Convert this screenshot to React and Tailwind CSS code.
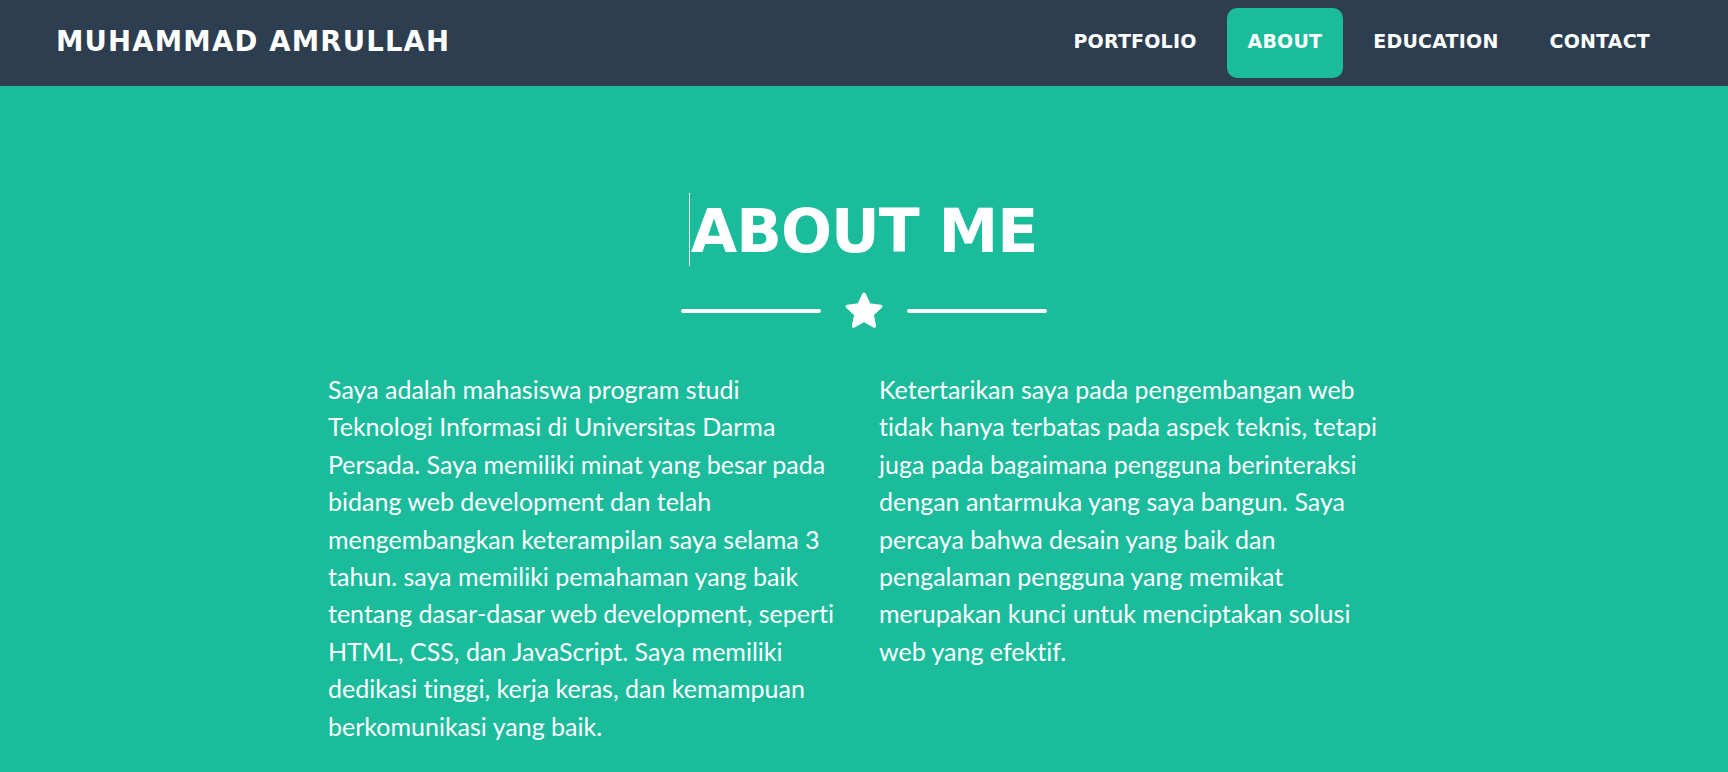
export default function App() {
  const head = { fontFamily: '"DejaVu Sans", "Open Sans", sans-serif' };
  const body = { fontFamily: 'Lato, "Open Sans", sans-serif' };
  return (
    <div className="min-h-[772px] bg-[#1abc9c]">
      <nav className="h-[86px] bg-[#2c3e50] flex items-center justify-between pl-[56px] pr-[57px]" style={head}>
        <a className="text-white font-bold text-[27.5px] tracking-[1.2px] pb-[2px]">MUHAMMAD AMRULLAH</a>
        <ul className="flex items-center gap-[9px] text-white font-bold text-[19px] tracking-[0.2px]">
          <li className="px-[21px] h-[70px] pb-[4px] flex items-center rounded-[10px]">PORTFOLIO</li>
          <li className="px-[21px] h-[70px] pb-[4px] flex items-center rounded-[10px] bg-[#1abc9c]">ABOUT</li>
          <li className="px-[21px] h-[70px] pb-[4px] flex items-center rounded-[10px]">EDUCATION</li>
          <li className="px-[21px] h-[70px] pb-[4px] flex items-center rounded-[10px]">CONTACT</li>
        </ul>
      </nav>
      <section className="pt-[115px] text-white">
        <div className="flex justify-center">
          <h2 className="relative font-bold text-[60px] leading-none tracking-[-1px]" style={head}>
            <span className="absolute left-[-2px] top-[-8px] h-[73px] w-px bg-white" />
            ABOUT ME
          </h2>
        </div>
        <div className="flex items-center justify-center gap-[21px] mt-[29px]">
          <div className="h-[4px] w-[140px] bg-white rounded-full" />
          <svg width="44" height="42" viewBox="0 0 24 24" fill="white" stroke="white" strokeWidth="2" strokeLinejoin="round">
            <path d="M12 2.5l2.9 6.1 6.6.8-4.9 4.6 1.3 6.6L12 17.3l-5.9 3.3 1.3-6.6-4.9-4.6 6.6-.8z" />
          </svg>
          <div className="h-[4px] w-[140px] bg-white rounded-full" />
        </div>
        <div className="grid grid-cols-[521px_521px] gap-[30px] justify-center mt-[39px] text-[25px] leading-[37.4px] [font-variant-ligatures:none]" style={body}>
          <p>Saya adalah mahasiswa program studi Teknologi Informasi di Universitas Darma Persada. Saya memiliki minat yang besar pada bidang web development dan telah mengembangkan keterampilan saya selama 3 tahun. saya memiliki pemahaman yang baik tentang dasar-dasar web development, seperti HTML, CSS, dan JavaScript. Saya memiliki dedikasi tinggi, kerja keras, dan kemampuan berkomunikasi yang baik.</p>
          <p>Ketertarikan saya pada pengembangan web tidak hanya terbatas pada aspek teknis, tetapi juga pada bagaimana pengguna berinteraksi dengan antarmuka yang saya bangun. Saya percaya bahwa desain yang baik dan pengalaman pengguna yang memikat merupakan kunci untuk menciptakan solusi web yang efektif.</p>
        </div>
      </section>
    </div>
  );
}
